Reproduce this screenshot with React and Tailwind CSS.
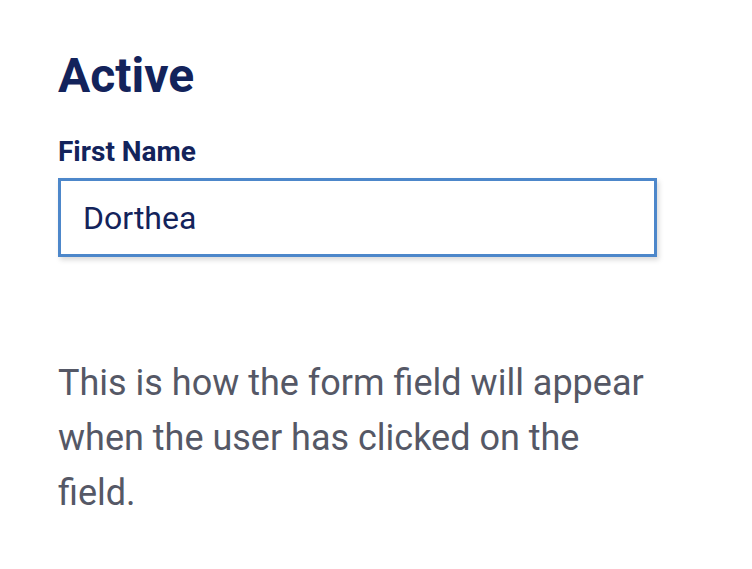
import React from 'react'

const App = () => {
  return (
    <div className="min-h-[569px] w-full bg-white px-[58px] pt-[48px] font-['Roboto',sans-serif]">
      <h1 className="text-[48px] leading-[56px] font-bold text-[#13235b]">Active</h1>

      <div className="mt-[32px] w-[599px]">
        <label className="block text-[28px] leading-[32px] font-bold text-[#13235b]">First Name</label>
        <input
          type="text"
          defaultValue="Dorthea"
          className="mt-[10px] h-[79px] w-full border-[3px] border-[#4d87ca] bg-white px-[22px] text-[32px] text-[#13235b] shadow-[2px_3px_5px_rgba(0,0,0,0.15)] outline-none"
        />
      </div>

      <p className="mt-[99px] w-[600px] text-[36px] leading-[55px] text-[#555866]">
        This is how the form field will appear when the user has clicked on the field.
      </p>
    </div>
  )
}

export default App
